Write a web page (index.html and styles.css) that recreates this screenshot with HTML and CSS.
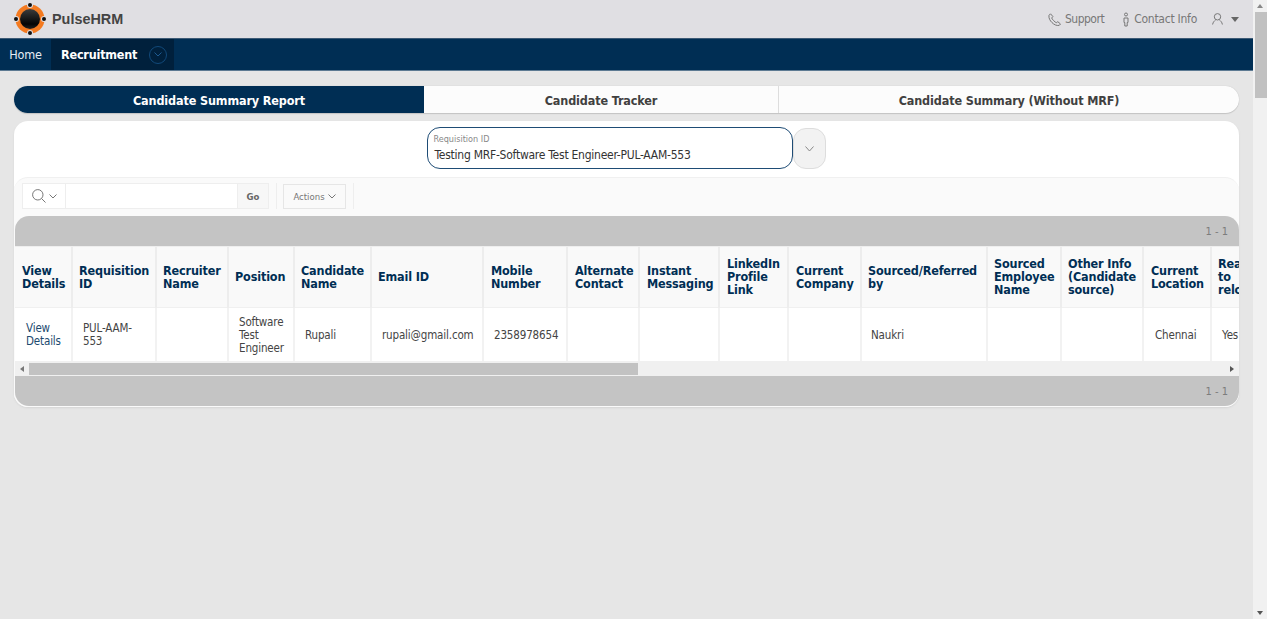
FILE: index.html
```html
<!DOCTYPE html>
<html lang="en">
<head>
<meta charset="utf-8">
<title>PulseHRM</title>
<link rel="stylesheet" href="styles.css">
</head>
<body>
<div class="page">
  <header class="topbar">
    <div class="brand">
      <svg class="logo" width="36" height="36" viewBox="0 0 36 36">
        <defs><linearGradient id="ball" x1="0" y1="0" x2="0" y2="1"><stop offset="0" stop-color="#3c3c3c"/><stop offset="0.75" stop-color="#050505"/><stop offset="1" stop-color="#222"/></linearGradient></defs>
        <circle cx="17" cy="18" r="14.5" fill="#f47a20"/>
        <circle cx="17" cy="18" r="10" fill="url(#ball)"/>
        <circle cx="17" cy="4" r="3" fill="#e0dfe3"/><circle cx="17" cy="32" r="3" fill="#e0dfe3"/>
        <circle cx="3" cy="18" r="3" fill="#e0dfe3"/><circle cx="31" cy="18" r="3" fill="#e0dfe3"/>
        <circle cx="17" cy="4" r="2" fill="#111"/><circle cx="17" cy="32" r="2" fill="#111"/>
        <circle cx="3" cy="18" r="2" fill="#111"/><circle cx="31" cy="18" r="2" fill="#111"/>
      </svg>
      <span class="brand-name">PulseHRM</span>
    </div>
    <nav class="util">
      <a class="util-item util-support"><svg width="13" height="13" viewBox="0 0 13 13" fill="none" stroke="#777" stroke-width="1"><path d="M2.500.8 1 2.300c-.5 2.800 1 5.300 3 7.300 2 2 4.600 3.300 7.200 2.800l1.300-1.400-2.700-2.300-1.500 1C7.200 9.400 3.900 6.100 3.700 5l1.200-1.500Z"/></svg>Support</a>
      <a class="util-item util-contact"><svg width="8" height="15" viewBox="0 0 8 15" fill="none" stroke="#777" stroke-width="1"><circle cx="4" cy="2.500" r="1.500"/><path d="M2 6h4v4.500H5.200V14H2.800v-3.500H2Z"/></svg>Contact Info</a>
      <a class="util-item user"><svg width="11" height="12" viewBox="0 0 11 12" fill="none" stroke="#777" stroke-width="1"><circle cx="5.500" cy="3.800" r="3.200"/><path d="M.6 11.500c.4-2.500 2-3.800 2.900-4.400M10.400 11.500c-.4-2.500-2-3.800-2.900-4.400"/></svg><span class="caret"></span></a>
    </nav>
  </header>
  <nav class="mainnav">
    <a class="nav-home">Home</a>
    <div class="nav-active">
      <span>Recruitment</span>
      <span class="nav-toggle"><svg width="8" height="5" viewBox="0 0 8 5" fill="none" stroke="#1d5a90" stroke-width="1"><path d="M.5.5 4 4 7.500.5"/></svg></span>
    </div>
  </nav>
  <main class="content">
    <div class="tabs">
      <a class="tab tab-on">Candidate Summary Report</a>
      <a class="tab tab-mid">Candidate Tracker</a>
      <a class="tab tab-last">Candidate Summary (Without MRF)</a>
    </div>
    <section class="card">
      <div class="filter">
        <div class="select">
          <label class="select-label">Requisition ID</label>
          <div class="select-value">Testing MRF-Software Test Engineer-PUL-AAM-553</div>
        </div>
        <button class="select-btn"><svg width="9" height="6" viewBox="0 0 9 6" fill="none" stroke="#888" stroke-width="1"><path d="M.5.500 4.500 5 8.500.500"/></svg></button>
      </div>
      <div class="report">
        <div class="toolbar">
          <div class="search">
            <span class="search-col">
              <svg width="14" height="14" viewBox="0 0 14 14" fill="none" stroke="#777" stroke-width="1"><circle cx="5.800" cy="5.800" r="5.200"/><path d="M9.500 9.500 13.500 13.500"/></svg>
              <svg width="8" height="5" viewBox="0 0 8 5" fill="none" stroke="#777" stroke-width="1"><path d="M.5.500 4 4 7.500.500"/></svg>
            </span>
            <span class="search-input"></span>
            <span class="search-go">Go</span>
          </div>
          <span class="tool-sep"></span>
          <span class="actions">Actions <svg width="8" height="5" viewBox="0 0 8 5" fill="none" stroke="#777" stroke-width="1"><path d="M.5.500 4 4 7.500.500"/></svg></span>
          <span class="tool-sep tool-sep-end"></span>
        </div>
        <div class="band band-top"><span>1 - 1</span></div>
        <div class="table-wrap">
          <table class="grid">
            <colgroup>
              <col class="c1"><col class="c2"><col class="c3"><col class="c4"><col class="c5"><col class="c6"><col class="c7"><col class="c8"><col class="c9"><col class="c10"><col class="c11"><col class="c12"><col class="c13"><col class="c14"><col class="c15"><col class="c16">
            </colgroup>
            <thead>
              <tr>
                <th>View Details</th><th>Requisition ID</th><th>Recruiter Name</th><th>Position</th><th>Candidate Name</th><th>Email ID</th><th>Mobile Number</th><th>Alternate Contact</th><th>Instant Messaging</th><th>LinkedIn Profile Link</th><th>Current Company</th><th>Sourced/Referred by</th><th>Sourced Employee Name</th><th>Other Info (Candidate source)</th><th>Current Location</th><th>Ready to relocate</th>
              </tr>
            </thead>
            <tbody>
              <tr>
                <td><a class="link">View Details</a></td><td>PUL-AAM-553</td><td></td><td>Software Test Engineer</td><td>Rupali</td><td>rupali@gmail.com</td><td>2358978654</td><td></td><td></td><td></td><td></td><td>Naukri</td><td></td><td></td><td>Chennai</td><td>Yes</td>
              </tr>
            </tbody>
          </table>
        </div>
        <div class="hscroll">
          <span class="arrow-l"></span>
          <div class="hscroll-track"><div class="hscroll-thumb"></div></div>
          <span class="arrow-r"></span>
        </div>
        <div class="band band-bottom"><span>1 - 1</span></div>
      </div>
    </section>
  </main>
</div>
<aside class="vscroll">
  <span class="v-up"></span>
  <div class="v-track"><div class="v-thumb"></div></div>
  <span class="v-down"></span>
</aside>
</body>
</html>
```
FILE: styles.css
```css
* { box-sizing: border-box; }
html, body { margin: 0; height: 100%; overflow: hidden; }
body {
  display: flex;
  width: 1267px;
  height: 619px;
  background: #e6e6e6;
  font-family: "DejaVu Sans", sans-serif;
  font-stretch: condensed;
  color: #404040;
}
.page { width: 1253px; display: flex; flex-direction: column; }

.topbar {
  height: 38px;
  background: #e0dfe3;
  display: flex;
  align-items: center;
  justify-content: space-between;
  padding: 0 14px 0 13px;
}
.brand { display: flex; align-items: center; gap: 3px; }
.logo { display: block; }
.brand-name { font-family: "Liberation Sans", sans-serif; font-weight: 700; font-size: 14.400px; color: #444; }
.util { display: flex; align-items: center; gap: 17px; }
.util-item { display: flex; align-items: center; gap: 4px; font-size: 12px; letter-spacing: -0.25px; color: #777; }
.util-support { letter-spacing: -0.5px; }
.util-contact { margin-left: 1px; }
.util-item.user { gap: 8px; margin-left: -2px; }
.caret { width: 0; height: 0; border-left: 4px solid transparent; border-right: 4px solid transparent; border-top: 5px solid #666; }

.mainnav {
  height: 33px;
  background: #002e54;
  border-top: 1px solid #3d5a75;
  border-bottom: 1px solid #5d7a92;
  display: flex;
  align-items: stretch;
  color: #fff;
  font-size: 12.500px;
  letter-spacing: -0.2px;
}
.nav-home { width: 51px; display: flex; align-items: center; justify-content: center; color: #e6edf3; }
.nav-active {
  width: 123px;
  background: #00203c;
  display: flex;
  align-items: center;
  padding-left: 10px;
  gap: 12px;
  font-weight: 700;
}
.nav-toggle {
  width: 18px;
  height: 18px;
  border-radius: 50%;
  border: 1px solid #11497a;
  display: flex;
  align-items: center;
  justify-content: center;
}

.content { padding: 15px 14px 0; }

.tabs {
  height: 27px;
  display: flex;
  border-radius: 14px;
  background: #fcfcfc;
  box-shadow: 0 1px 1px #c4c4c4, 0 0 1px #bbb;
  font-size: 12.500px;
  letter-spacing: -0.13px;
  font-weight: 700;
  overflow: hidden;
}
.tab { display: flex; align-items: center; justify-content: center; padding-top: 1px; }
.tab-on { width: 410px; background: #002e54; color: #fff; }
.tab-mid { width: 355px; border-right: 1px solid #ddd; }
.tab-last { flex: 1; }

.card {
  margin-top: 8px;
  background: #fff;
  border-radius: 14px;
  box-shadow: 0 1px 2px #d4d4d4;
  height: 286px;
  display: flex;
  flex-direction: column;
  overflow: hidden;
}
.filter {
  height: 56px;
  padding-top: 6px;
  display: flex;
  justify-content: center;
  align-items: flex-start;
  padding-right: 1px;
}
.select {
  width: 366px;
  height: 42px;
  border: 1px solid #1e4c75;
  border-radius: 13px;
  padding: 6px 6px 0;
  background: #fff;
}
.select-label { display: block; font-size: 9px; line-height: 11px; color: #888; }
.select-value { font-size: 12px; letter-spacing: -0.25px; line-height: 16px; margin-top: 2px; padding-left: 1px; color: #333; }
.select-btn {
  width: 33px;
  height: 41px;
  margin-top: 1px;
  border: 1px solid #ddd;
  border-radius: 13px;
  background: #f2f2f2;
  padding: 0;
  display: flex;
  align-items: center;
  justify-content: center;
}

.report {
  flex: 1;
  border-radius: 14px 14px 0 0;
  background: #fafafa;
  border-top: 1px solid #f0f0f0;
  display: flex;
  flex-direction: column;
  min-height: 0;
}
.toolbar { height: 38px; padding: 5px 0 0 8px; display: flex; align-items: flex-start; }
.search {
  width: 247px;
  height: 26px;
  display: flex;
  border: 1px solid #eee;
  background: #fff;
}
.search-col {
  width: 43px;
  display: flex;
  align-items: center;
  justify-content: center;
  gap: 3px;
  border-right: 1px solid #eee;
}
.search-input { flex: 1; }
.search-go {
  width: 31px;
  border-left: 1px solid #eee;
  background: #f7f7f7;
  font-size: 9.500px;
  font-weight: 700;
  color: #666;
  display: flex;
  align-items: center;
  justify-content: center;
}
.tool-sep { width: 1px; height: 26px; margin-left: 7px; background: #eee; }
.tool-sep-end { margin-left: 7px; }
.actions {
  width: 63px;
  height: 25px;
  margin: 1px 0 0 6px;
  border: 1px solid #e6e6e6;
  background: #fafafa;
  font-size: 9.500px;
  color: #777;
  display: flex;
  align-items: center;
  justify-content: center;
  gap: 3px;
}
.band {
  height: 30px;
  margin-left: 1px;
  background: #c4c4c4;
  color: #7c7c7c;
  font-size: 11px;
  display: flex;
  align-items: center;
  justify-content: flex-end;
  padding-right: 11px;
  flex: none;
}
.band-top { border-radius: 14px 14px 0 0; padding-top: 1px; }
.band-bottom { border-radius: 0 0 14px 14px; }

.table-wrap { overflow: hidden; margin-left: 1px; flex: none; border-top: 1px solid #eee; }
.grid { border-collapse: collapse; table-layout: fixed; width: 1256px; background: #fff; }
.c1 { width: 57px; } .c2 { width: 84px; } .c3 { width: 72px; } .c4 { width: 66px; }
.c5 { width: 77px; } .c6 { width: 112px; } .c7 { width: 84px; } .c8 { width: 72px; }
.c9 { width: 80px; } .c10 { width: 69px; } .c11 { width: 73px; } .c12 { width: 126px; }
.c13 { width: 74px; } .c14 { width: 82px; } .c15 { width: 68px; } .c16 { width: 71px; }
.grid th {
  height: 60px;
  background: #f9f9f9;
  color: #002e54;
  font-size: 12.500px;
  letter-spacing: -0.15px;
  line-height: 13px;
  font-weight: 700;
  text-align: left;
  padding: 0 4px 0 6px;
  border-left: 2px solid #ededed;
  border-bottom: 1px solid #f0f0f0;
}
.grid th:last-child { padding-right: 20px; }
.grid td {
  height: 54px;
  font-size: 11.500px;
  letter-spacing: -0.15px;
  line-height: 13px;
  color: #444;
  padding: 2px 10px 0 10px;
  border-left: 2px solid #f2f2f2;
}
.grid th:first-child, .grid td:first-child { border-left: 0; }
.grid th:first-child { padding-left: 7px; }
.grid td:first-child { padding-left: 11px; }
.grid th:nth-child(n+7):nth-child(-n+11), .grid th:nth-child(15) { padding-left: 7px; }
.grid td:nth-child(12) { padding-left: 9px; }
.grid td:nth-child(15) { padding-left: 11px; }
.link { color: #1d4a70; }

.hscroll { height: 15px; margin-left: 1px; background: #f0f0f0; display: flex; align-items: center; flex: none; }
.arrow-l { width: 14px; display: flex; justify-content: center; }
.arrow-l::before { content: ""; border-right: 4px solid #777; border-top: 3px solid transparent; border-bottom: 3px solid transparent; }
.arrow-r { width: 14px; display: flex; justify-content: center; }
.arrow-r::before { content: ""; border-left: 4px solid #555; border-top: 3px solid transparent; border-bottom: 3px solid transparent; }
.hscroll-track { flex: 1; height: 12px; }
.hscroll-thumb { width: 609px; height: 12px; background: #c2c2c2; }

.vscroll { width: 14px; background: #f1f1f1; display: flex; flex-direction: column; align-items: center; }
.v-up, .v-down { height: 12px; display: flex; align-items: center; justify-content: center; }
.v-up::before { content: ""; border-bottom: 4px solid #888; border-left: 3.500px solid transparent; border-right: 3.500px solid transparent; }
.v-down::before { content: ""; border-top: 4px solid #555; border-left: 3.500px solid transparent; border-right: 3.500px solid transparent; }
.v-track { flex: 1; width: 100%; }
.v-thumb { width: 12px; margin-left: 2px; height: 86px; background: #c1c1c1; }
```
